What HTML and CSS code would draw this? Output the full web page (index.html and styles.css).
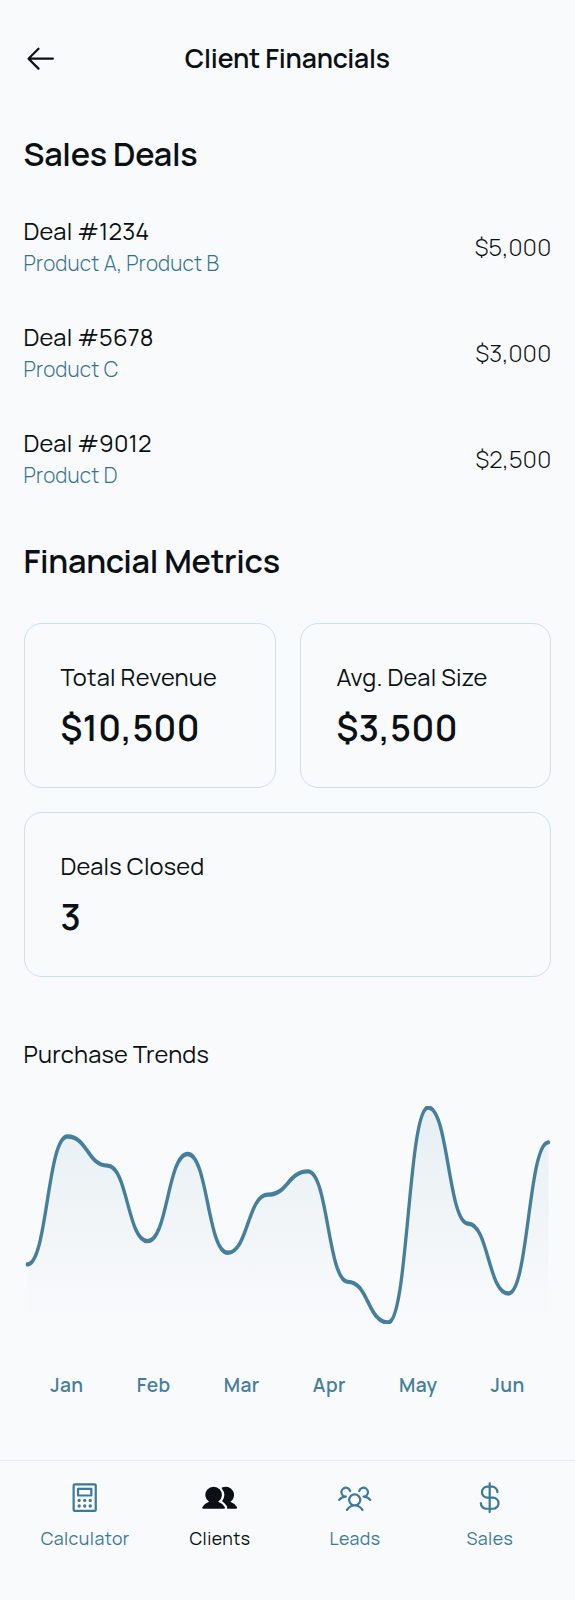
FILE: index.html
```html
<!DOCTYPE html>
<html lang="en">
<head>
<meta charset="utf-8">
<title>Client Financials</title>
<link rel="stylesheet" href="styles.css">
</head>
<body>
<div class="screen">
  <header class="header">
    <svg class="icon" viewBox="0 0 256 256"><path d="M224,128a8,8,0,0,1-8,8H59.31l58.35,58.34a8,8,0,0,1-11.32,11.32l-72-72a8,8,0,0,1,0-11.32l72-72a8,8,0,0,1,11.32,11.32L59.31,120H216A8,8,0,0,1,224,128Z"/></svg>
    <h1 class="title"><span>Client Financials</span></h1>
  </header>
  <main class="main">
    <h2 class="heading heading-sales"><span>Sales Deals</span></h2>
    <section class="deals">
      <div class="deal">
        <div><div class="deal-name"><span>Deal #1234</span></div><div class="deal-products"><span>Product A, Product B</span></div></div>
        <div class="amount">$5,000</div>
      </div>
      <div class="deal">
        <div><div class="deal-name"><span>Deal #5678</span></div><div class="deal-products"><span>Product C</span></div></div>
        <div class="amount">$3,000</div>
      </div>
      <div class="deal">
        <div><div class="deal-name"><span>Deal #9012</span></div><div class="deal-products"><span>Product D</span></div></div>
        <div class="amount">$2,500</div>
      </div>
    </section>
    <h2 class="heading heading-metrics"><span>Financial Metrics</span></h2>
    <section class="metrics">
      <div class="card"><div class="label">Total Revenue</div><div class="value">$10,500</div></div>
      <div class="card"><div class="label">Avg. Deal Size</div><div class="value">$3,500</div></div>
      <div class="card card-wide"><div class="label">Deals Closed</div><div class="value">3</div></div>
    </section>
    <section class="trends">
      <div class="label trends-label">Purchase Trends</div>
      <svg class="chart" viewBox="-3 0 478 150" preserveAspectRatio="none">
        <defs><linearGradient id="fade" x1="0" y1="1" x2="0" y2="149" gradientUnits="userSpaceOnUse"><stop offset="0" stop-color="#e7eff3"/><stop offset="1" stop-color="#e7eff3" stop-opacity="0"/></linearGradient></defs>
        <path fill="url(#fade)" d="M0 109C18.15 109 18.15 21 36.31 21C54.46 21 54.46 41 72.62 41C90.77 41 90.77 93 108.92 93C127.08 93 127.08 33 145.23 33C163.38 33 163.38 101 181.54 101C199.69 101 199.69 61 217.85 61C236 61 236 45 254.15 45C272.31 45 272.31 121 290.46 121C308.62 121 308.62 149 326.77 149C344.92 149 344.92 1 363.08 1C381.23 1 381.23 81 399.38 81C417.54 81 417.54 129 435.69 129C453.85 129 453.85 25 472 25V149H0Z"/>
        <path class="line" d="M0 109C18.15 109 18.15 21 36.31 21C54.46 21 54.46 41 72.62 41C90.77 41 90.77 93 108.92 93C127.08 93 127.08 33 145.23 33C163.38 33 163.38 101 181.54 101C199.69 101 199.69 61 217.85 61C236 61 236 45 254.15 45C272.31 45 272.31 121 290.46 121C308.62 121 308.62 149 326.77 149C344.92 149 344.92 1 363.08 1C381.23 1 381.23 81 399.38 81C417.54 81 417.54 129 435.69 129C453.85 129 453.85 25 472 25"/>
      </svg>
      <div class="months"><span>Jan</span><span>Feb</span><span>Mar</span><span>Apr</span><span>May</span><span>Jun</span></div>
    </section>
  </main>
  <nav class="nav">
    <div class="tab"><svg class="icon" viewBox="0 0 256 256"><path d="M80,120h96a8,8,0,0,0,8-8V64a8,8,0,0,0-8-8H80a8,8,0,0,0-8,8v48A8,8,0,0,0,80,120Zm8-48h80v32H88ZM200,24H56A16,16,0,0,0,40,40V216a16,16,0,0,0,16,16H200a16,16,0,0,0,16-16V40A16,16,0,0,0,200,24Zm0,192H56V40H200ZM100,148a12,12,0,1,1-12-12A12,12,0,0,1,100,148Zm40,0a12,12,0,1,1-12-12A12,12,0,0,1,140,148Zm40,0a12,12,0,1,1-12-12A12,12,0,0,1,180,148Zm-80,40a12,12,0,1,1-12-12A12,12,0,0,1,100,188Zm40,0a12,12,0,1,1-12-12A12,12,0,0,1,140,188Zm40,0a12,12,0,1,1-12-12A12,12,0,0,1,180,188Z"/></svg><span>Calculator</span></div>
    <div class="tab tab-active"><svg class="icon" viewBox="0 0 256 256"><path d="M164.47,195.63a8,8,0,0,1-6.7,12.37H10.23a8,8,0,0,1-6.7-12.37,95.83,95.83,0,0,1,47.22-37.71,60,60,0,1,1,66.5,0A95.83,95.83,0,0,1,164.47,195.63Zm87.91-.15a95.87,95.87,0,0,0-47.13-37.56A60,60,0,0,0,144.7,54.59a4,4,0,0,0-1.33,6A75.83,75.83,0,0,1,147,150.53a4,4,0,0,0,1.07,5.53,112.32,112.32,0,0,1,29.85,30.83,23.92,23.92,0,0,1,3.65,16.47,4,4,0,0,0,3.95,4.64h60.3a8,8,0,0,0,7.73-5.93A8.22,8.22,0,0,0,252.38,195.48Z"/></svg><span>Clients</span></div>
    <div class="tab"><svg class="icon" viewBox="0 0 256 256"><path d="M244.8,150.4a8,8,0,0,1-11.2-1.6A51.6,51.6,0,0,0,192,128a8,8,0,0,1-7.37-4.89,8,8,0,0,1,0-6.22A8,8,0,0,1,192,112a24,24,0,1,0-23.24-30,8,8,0,1,1-15.5-4A40,40,0,1,1,219,117.51a67.94,67.94,0,0,1,27.43,21.68A8,8,0,0,1,244.8,150.4ZM190.92,212a8,8,0,1,1-13.84,8,57,57,0,0,0-98.16,0,8,8,0,1,1-13.84-8,72.06,72.06,0,0,1,33.74-29.92,48,48,0,1,1,58.36,0A72.06,72.06,0,0,1,190.92,212ZM128,176a32,32,0,1,0-32-32A32,32,0,0,0,128,176ZM72,120a8,8,0,0,0-8-8A24,24,0,1,1,87.24,82a8,8,0,1,0,15.5-4A40,40,0,1,0,37,117.51,67.94,67.94,0,0,0,9.6,139.19a8,8,0,1,0,12.8,9.61A51.6,51.6,0,0,1,64,128,8,8,0,0,0,72,120Z"/></svg><span>Leads</span></div>
    <div class="tab"><svg class="icon" viewBox="0 0 256 256"><path d="M152,120H136V56h8a32,32,0,0,1,32,32,8,8,0,0,0,16,0,48.05,48.05,0,0,0-48-48h-8V24a8,8,0,0,0-16,0V40h-8a48,48,0,0,0,0,96h8v64H104a32,32,0,0,1-32-32,8,8,0,0,0-16,0,48.05,48.05,0,0,0,48,48h16v16a8,8,0,0,0,16,0V216h16a48,48,0,0,0,0-96Zm-40,0a32,32,0,0,1,0-64h8v64Zm40,80H136V136h16a32,32,0,0,1,0,64Z"/></svg><span>Sales</span></div>
  </nav>
</div>
</body>
</html>
```
FILE: styles.css
```css
* { box-sizing: border-box; }
body { margin: 0; background: #f9fafc; color: #0a1014; font-family: Manrope, Inter, sans-serif; }
h1, h2 { margin: 0; }
.screen { width: 575px; height: 1600px; display: flex; flex-direction: column; overflow: hidden; }
.icon { width: 35.4px; height: 35.4px; fill: currentColor; flex: none; display: block; }
.header { height: 118px; padding: 0 23.6px 0 23.2px; display: flex; align-items: center; }
.title { flex: 1; padding-right: 35.4px; padding-bottom: 2px; text-align: center; font-size: 26.54px; line-height: 34px; font-weight: 600; letter-spacing: -0.17px; }
.main { padding: 0 23.6px; flex: 1; }
.heading { font-size: 32.44px; line-height: 40px; font-weight: 600; letter-spacing: -0.28px; }
.heading-sales { padding-top: 15.5px; height: 57px; }
.deals { padding-top: 19px; }
.deal { height: 106px; display: flex; align-items: center; justify-content: space-between; }
.deal-name { margin-top: -2px; font-size: 23.6px; line-height: 35px; font-weight: 400; letter-spacing: 0.18px; }
.deal-products { font-size: 20.64px; line-height: 29px; font-weight: 300; letter-spacing: 0.17px; color: #34738f; }
.amount { font-size: 23.6px; font-weight: 300; letter-spacing: 0.25px; }
.heading-metrics { padding-top: 29px; }
.metrics { padding-top: 42px; display: grid; grid-template-columns: 1fr 1fr; gap: 24px; }
.card { height: 165px; border: 1.5px solid #cfe0e8; border-radius: 18px; padding: 35px 35.9px; }
.card-wide { grid-column: 1 / 3; }
.label { font-size: 23.6px; line-height: 36px; font-weight: 400; letter-spacing: 0.2px; white-space: nowrap; }
.value { margin-top: 11px; font-size: 35.4px; line-height: 44px; font-weight: 600; letter-spacing: 0.55px; white-space: nowrap; }
.trends-label { margin-top: 58.5px; }
.chart { display: block; width: 527.8px; height: 218px; margin-top: 34.4px; }
.line { fill: none; stroke: #457f9b; stroke-width: 3; stroke-linecap: round; }
.months { margin-top: 47.2px; display: flex; justify-content: space-around; font-size: 19.17px; line-height: 28px; font-weight: 600; letter-spacing: 0.45px; color: #457f9b; }
.nav { height: 140px; border-top: 1.5px solid #e3edf1; padding: 18.6px 23.6px 0; display: grid; grid-template-columns: repeat(4, 1fr); column-gap: 11.8px; }
.tab { display: flex; flex-direction: column; align-items: center; gap: 10px; color: #3c7a98; font-size: 17.7px; line-height: 26px; font-weight: 400; letter-spacing: 0.46px; }
.tab-active { color: #0a1014; }
```
